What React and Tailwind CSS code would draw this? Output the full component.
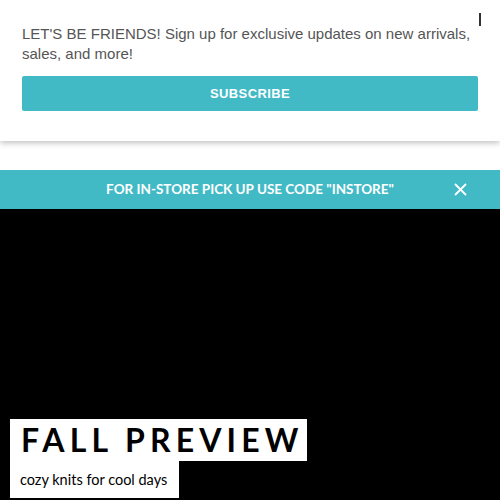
export default function App() {
  return (
    <div className="w-[500px] h-[500px] overflow-hidden bg-white flex flex-col">
      {/* Newsletter panel */}
      <div className="relative h-[141px] shrink-0 bg-white shadow-[0_2px_6px_rgba(0,0,0,0.25)] z-10 px-[22px] pt-[24px]">
        <div className="absolute left-[479px] top-[13px] w-[2px] h-[13px] bg-[#333]"></div>
        <p className="text-[15px] leading-[20px] text-[#555] font-['Liberation_Sans',sans-serif]">
          LET'S BE FRIENDS! Sign up for exclusive updates on new arrivals, sales, and more!
        </p>
        <button className="mt-[12px] w-full h-[35px] rounded-[2px] bg-[#42bac6] text-white text-[13px] font-bold font-['Liberation_Sans',sans-serif] tracking-[0.03em]">
          SUBSCRIBE
        </button>
      </div>

      <div className="h-[29px] shrink-0"></div>

      {/* Promo bar */}
      <div className="h-[39px] shrink-0 bg-[#42bac6] flex items-center justify-center relative">
        <span className="text-white text-[13.5px] font-bold font-['Lato',sans-serif]">
          FOR IN-STORE PICK UP USE CODE "INSTORE"
        </span>
        <svg className="absolute right-[33px] top-[13px]" width="13" height="13" viewBox="0 0 13 13" fill="none" stroke="white" strokeWidth="1.8">
          <path d="M1 1 L12 12 M12 1 L1 12" />
        </svg>
      </div>

      {/* Hero */}
      <div className="flex-1 bg-black flex flex-col justify-end items-start pl-[10px] pb-[2px]">
        <div className="bg-white h-[42px] w-[297px] flex items-center pl-[11px]">
          <span className="text-black text-[32px] font-bold tracking-[0.16em] font-['Lato',sans-serif] leading-none">
            FALL PREVIEW
          </span>
        </div>
        <div className="bg-white h-[37px] w-[169px] flex items-center pl-[10px]">
          <span className="text-black text-[14.5px] font-['Lato',sans-serif]">cozy knits for cool days</span>
        </div>
      </div>
    </div>
  );
}
